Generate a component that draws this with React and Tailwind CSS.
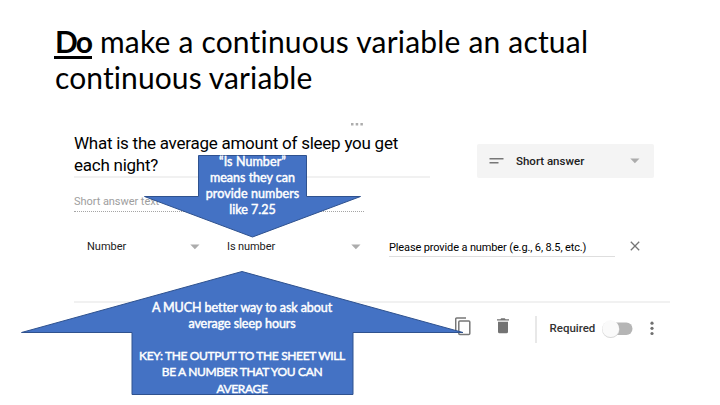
const Caret = () => (
  <svg width="10" height="6" viewBox="0 0 10 6" className="block shrink-0">
    <path d="M0.3 0.5h9.2L4.9 5.3z" fill="#acacac" />
  </svg>
);

function Title() {
  return (
    <h1 className="h-[118px] pl-[55px] pt-[23px] font-['Lato','Carlito',sans-serif] text-[30px] leading-[36px] text-black">
      <div className="whitespace-nowrap tracking-[0.19px]">
        <span className="inline-block h-[36px] w-[37px] font-bold tracking-[-1.8px]">
          Do
          <span className="-ml-[1px] block h-[3px] w-[38px] -translate-y-[3px] bg-black" />
        </span>
        <span className="ml-[8px]">make a continuous variable an actual</span>
      </div>
      <div className="whitespace-nowrap tracking-[0.1px]">continuous variable</div>
    </h1>
  );
}

function Question() {
  return (
    <div className="flex h-[86px] w-[581px]">
      <div className="w-[356px]">
        <div className="h-[47px] border-b-2 border-[#f1f1f1] pt-[2px] text-[17px] leading-[21.5px] tracking-[-0.25px] text-black whitespace-nowrap">
          What is the average amount of sleep you get
          <br />
          each night?
        </div>
        <div className="mt-[15px] h-[19px] w-[290px] border-b border-dotted border-[#a5a5a5] text-[11px] leading-[18px] tracking-[-0.05px] text-[#9e9e9e]">
          Short answer text
        </div>
      </div>
      <div className="ml-[47px] mt-[13px] flex h-[34px] w-[177px] items-center rounded-[2px] bg-[#f4f4f4] pl-[12px] pr-[14px]">
        <svg width="15" height="8" viewBox="0 0 15 8" className="block">
          <path d="M0.5 1.8h14M0.5 5.8h9" stroke="#777" strokeWidth="1.5" />
        </svg>
        <span className="ml-[12px] grow pt-[2px] text-[11.5px] font-medium text-[#212121]">Short answer</span>
        <Caret />
      </div>
    </div>
  );
}

function Validation() {
  return (
    <div className="flex h-[38px] w-[596px] items-start pl-[13px] text-[11px] leading-[16px] text-[#212121]">
      <span className="w-[103px] pt-[1px]">Number</span>
      <div className="pt-[6px]"><Caret /></div>
      <span className="ml-[27px] w-[124px] pt-[1px] tracking-[-0.1px]">Is number</span>
      <div className="pt-[6px]"><Caret /></div>
      <div className="ml-[28px] h-[19px] w-[226px] border-b border-[#dedede] pt-[2px] tracking-[-0.13px] whitespace-nowrap text-black">
        Please provide a number (e.g., 6, 8.5, etc.)
      </div>
      <svg width="10" height="10" viewBox="0 0 10 10" className="ml-[15px] mt-[3px] block">
        <path d="M0.8 0.8l8.4 8.4M9.2 0.8L0.8 9.2" stroke="#757575" strokeWidth="1.3" />
      </svg>
    </div>
  );
}

function Footer() {
  return (
    <div className="flex h-[54px] w-[596px] items-center border-t-2 border-[#f1f1f1] pl-[381px]">
      <svg width="16" height="19" viewBox="0 0 16 19" className="-mt-[5px] block" fill="none" stroke="#777" strokeWidth="1.5">
        <path d="M11 0.9H1.7a1 1 0 0 0-1 1V14" />
        <rect x="3.8" y="4" width="11" height="13.5" rx="1" />
      </svg>
      <svg width="12" height="16" viewBox="0 0 12 16" className="-mt-[6px] ml-[26px] block" fill="#737373">
        <path d="M0 1.2h3.4L4.2 0.3h3.6l0.8 0.9H12v1.4H0zM1 3.8h10v10a1.5 1.5 0 0 1-1.5 1.5h-7A1.5 1.5 0 0 1 1 13.8z" />
      </svg>
      <div className="ml-[26px] h-[27px] w-[1.5px] bg-[#e8e8e8]" />
      <span className="ml-[13px] w-[51px] text-[11.5px] font-medium text-[#333]">Required</span>
      <svg width="34" height="22" viewBox="0 0 34 22" className="block shrink-0">
        <rect x="8" y="4.5" width="23.5" height="12.5" rx="6.2" fill="#b5b5b5" />
        <circle cx="9.7" cy="11.4" r="8.7" fill="#d8d8d8" />
        <circle cx="9.7" cy="10.7" r="8.4" fill="#fafafa" />
      </svg>
      <svg width="4" height="16" viewBox="0 0 4 16" className="ml-[15.5px] block" fill="#707070">
        <circle cx="2" cy="2.2" r="1.6" />
        <circle cx="2" cy="7.3" r="1.6" />
        <circle cx="2" cy="12.5" r="1.6" />
      </svg>
    </div>
  );
}

const calloutText =
  "relative text-center font-['Lato','Carlito',sans-serif] text-[12.5px] font-normal leading-[16px] text-white whitespace-nowrap [-webkit-text-stroke:0.45px_white]";

function DownCallout() {
  return (
    <div className="absolute left-[143px] top-[154px] h-[85px] w-[219px]">
      <svg width="219" height="85" viewBox="0 0 219 85" className="absolute inset-0">
        <path d="M55.5 1.5H163.5V42.5H217.5L109.5 83L1.5 42.5H55.5z" fill="#4472c4" stroke="#2f528f" />
      </svg>
      <div className={calloutText}>
        <div className="tracking-[0.1px]">“Is Number”</div>
        <div>means they can</div>
        <div className="tracking-[0.1px]">provide numbers</div>
        <div>like 7.25</div>
      </div>
    </div>
  );
}

function UpCallout() {
  return (
    <div className="absolute left-[20px] top-[270px] h-[126px] w-[444px] pt-[30px]">
      <svg width="444" height="126" viewBox="0 0 444 126" className="absolute inset-0">
        <path d="M222 1.5L443 62.5H333V124.5H112V62.5H1.5z" fill="#4472c4" stroke="#2f528f" />
      </svg>
      <div className={calloutText}>
        <div className="tracking-[-0.07px]">A MUCH better way to ask about</div>
        <div className="tracking-[-0.07px]">average sleep hours</div>
        <div className="mt-[16px] text-[12px] tracking-[-0.35px]">KEY: THE OUTPUT TO THE SHEET WILL</div>
        <div className="text-[12px] tracking-[-0.35px]">BE A NUMBER THAT YOU CAN</div>
        <div className="pt-[1px] text-[12px] tracking-[-0.35px]">AVERAGE</div>
      </div>
    </div>
  );
}

export default function App() {
  return (
    <main className="relative h-[405px] w-[720px] overflow-hidden bg-white font-['Roboto',sans-serif]">
      <Title />
      <section className="flex flex-col pl-[74px]">
        <svg width="12" height="3" viewBox="0 0 12 3" className="ml-[277px] mt-[5px] mb-[5px] block" fill="#adadad">
          <rect x="0" y="0" width="2.5" height="2.5" />
          <rect x="4.7" y="0" width="2.5" height="2.5" />
          <rect x="9.4" y="0" width="2.5" height="2.5" />
        </svg>
        <Question />
        <div className="mt-[21px]"><Validation /></div>
        <div className="mt-[25px]"><Footer /></div>
      </section>
      <DownCallout />
      <UpCallout />
    </main>
  );
}
